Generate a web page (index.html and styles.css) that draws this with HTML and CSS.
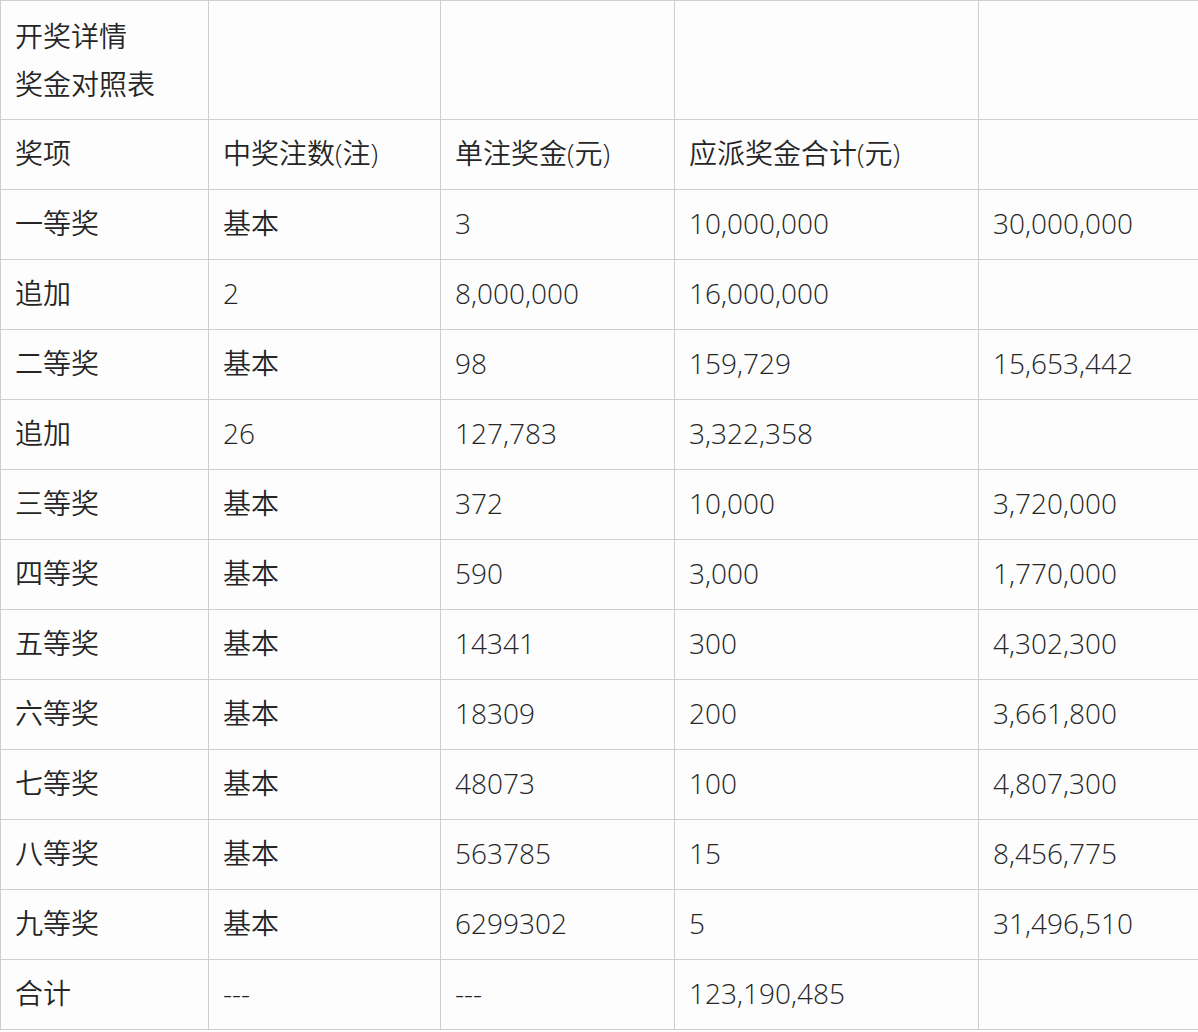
FILE: index.html
```html
<!DOCTYPE html>
<html lang="zh-CN">
<head>
<meta charset="utf-8">
<link rel="stylesheet" href="styles.css">
</head>
<body>
<table class="prize">
<colgroup>
<col class="c1"><col class="c2"><col class="c3"><col class="c4"><col class="c5">
</colgroup>
<tbody>
<tr class="head"><td>开奖详情<br>奖金对照表</td><td></td><td></td><td></td><td></td></tr>
<tr><td>奖项</td><td>中奖注数(注)</td><td>单注奖金(元)</td><td>应派奖金合计(元)</td><td></td></tr>
<tr><td>一等奖</td><td>基本</td><td>3</td><td>10,000,000</td><td>30,000,000</td></tr>
<tr><td>追加</td><td>2</td><td>8,000,000</td><td>16,000,000</td><td></td></tr>
<tr><td>二等奖</td><td>基本</td><td>98</td><td>159,729</td><td>15,653,442</td></tr>
<tr><td>追加</td><td>26</td><td>127,783</td><td>3,322,358</td><td></td></tr>
<tr><td>三等奖</td><td>基本</td><td>372</td><td>10,000</td><td>3,720,000</td></tr>
<tr><td>四等奖</td><td>基本</td><td>590</td><td>3,000</td><td>1,770,000</td></tr>
<tr><td>五等奖</td><td>基本</td><td>14341</td><td>300</td><td>4,302,300</td></tr>
<tr><td>六等奖</td><td>基本</td><td>18309</td><td>200</td><td>3,661,800</td></tr>
<tr><td>七等奖</td><td>基本</td><td>48073</td><td>100</td><td>4,807,300</td></tr>
<tr><td>八等奖</td><td>基本</td><td>563785</td><td>15</td><td>8,456,775</td></tr>
<tr><td>九等奖</td><td>基本</td><td>6299302</td><td>5</td><td>31,496,510</td></tr>
<tr><td>合计</td><td>---</td><td>---</td><td>123,190,485</td><td></td></tr>
</tbody>
</table>
</body>
</html>
```
FILE: styles.css
```css
html, body {
  margin: 0;
  padding: 0;
  background: #fdfdfe;
}
.prize {
  border-collapse: collapse;
  table-layout: fixed;
  width: 1198px;
  font-family: "Open Sans", "Noto Sans CJK SC", sans-serif;
  font-weight: 350;
  font-size: 28px;
  color: #252525;
}
.c1 { width: 208px; }
.c2 { width: 232px; }
.c3 { width: 234px; }
.c4 { width: 304px; }
.c5 { width: 220px; }
.prize td {
  border: 1px solid #cfcfd2;
  height: 70px;
  padding: 0 0 3px 14px;
  box-sizing: border-box;
  vertical-align: middle;
  line-height: 34px;
  white-space: nowrap;
}
.prize tr.head td {
  height: 119px;
  line-height: 48px;
  padding-bottom: 1px;
}
```
